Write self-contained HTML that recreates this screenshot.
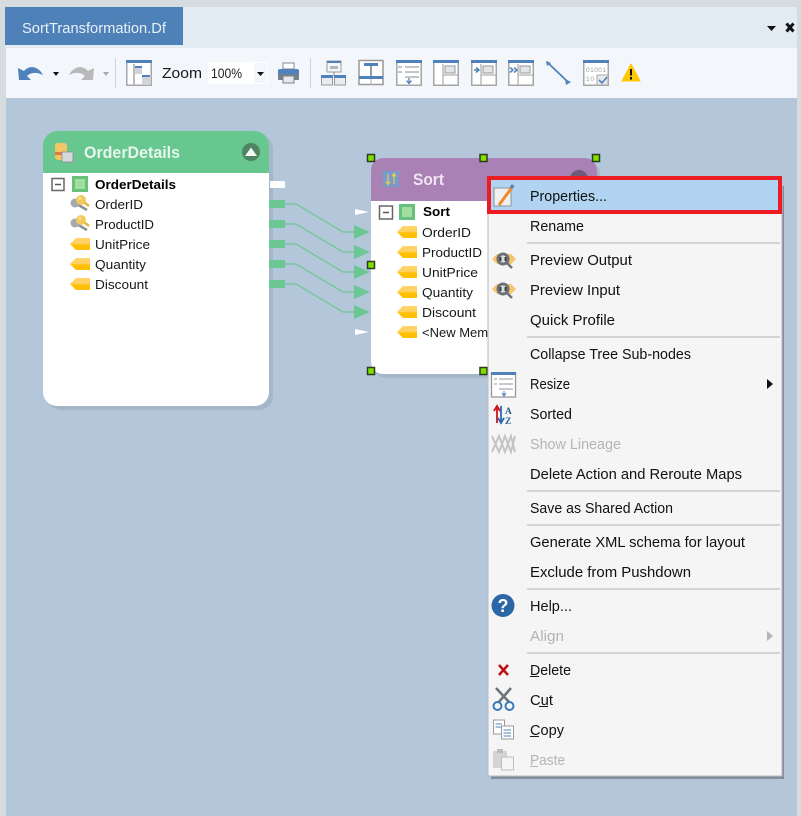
<!DOCTYPE html>
<html><head><meta charset="utf-8"><style>
html,body{margin:0;padding:0;width:801px;height:816px;overflow:hidden;background:#d6dbdf}
svg{display:block;filter:blur(.35px)}
text{font-family:"Liberation Sans",sans-serif}
.m{font-size:14.5px;fill:#111}
.g{font-size:14.5px;fill:#b4b4b4}
.t{font-size:13px;fill:#181818}
.b{font-size:13px;fill:#000;font-weight:bold}
.sep{stroke:#c8c8c8;stroke-width:1.5}
</style></head><body>
<svg width="801" height="816" viewBox="0 0 801 816" xmlns="http://www.w3.org/2000/svg">
<defs>
<linearGradient id="tag" x1="0" y1="0" x2="0" y2="1"><stop offset="0" stop-color="#ffd469"/><stop offset=".5" stop-color="#ffd060"/><stop offset=".55" stop-color="#ffc107"/><stop offset="1" stop-color="#ffbf00"/></linearGradient>
<symbol id="tagi" viewBox="0 0 20 12" width="20" height="12"><path d="M0 6L6 0H20V12H6Z" fill="url(#tag)"/></symbol>
<symbol id="key" viewBox="0 0 20 18" width="20" height="18"><path d="M5 9L17 16" stroke="#8a8f96" stroke-width="2.500" fill="none"/><circle cx="5" cy="9" r="4.500" fill="#a5aab0"/><path d="M11 6L19 12" stroke="#e3b43e" stroke-width="2.500" fill="none"/><circle cx="11" cy="6" r="5" fill="#f0cb5c"/><circle cx="10" cy="4.500" r="1.200" fill="#fbeab0"/></symbol>
<symbol id="prev" viewBox="0 0 26 20" width="26" height="20"><path d="M1 9L6 4H20L25 9L20 14H6Z" fill="#f3c56c"/><circle cx="12" cy="9" r="6.500" fill="#6c7078"/><circle cx="12" cy="9" r="3.600" fill="#d8dbdf"/><path d="M9.500 7v4M14.500 7v4" stroke="#333" stroke-width="1.800"/><path d="M16 13L21 18" stroke="#6c7078" stroke-width="2.500"/></symbol>
<symbol id="win" viewBox="0 0 26 26" width="26" height="26"><rect x=".75" y=".75" width="24.500" height="24.500" fill="#fff" stroke="#a6a6a6" stroke-width="1.500"/><rect x="0" y="0" width="26" height="3" fill="#4f81bd"/></symbol>
</defs>

<!-- chrome -->
<rect x="0" y="0" width="801" height="816" fill="#d6dbdf"/>
<rect x="5" y="7" width="792" height="41" fill="#e2eaf2"/>
<rect x="5" y="7" width="178" height="38" fill="#4f81b9"/>
<text x="22" y="33" font-size="14.500" fill="#e8f0f8" textLength="144" lengthAdjust="spacingAndGlyphs">SortTransformation.Df</text>
<path d="M767 26H776L771.500 31Z" fill="#111"/>
<path d="M786.500 23.500L793.500 31.500M793.500 23.500L786.500 31.500" stroke="#111" stroke-width="3"/>

<!-- toolbar -->
<rect x="6" y="48" width="791" height="50" fill="#f3f6fa"/>
<path d="M18 68L19 80L31 80L27 76C31 72 37 72 43 75C39 67 30 64 24 71Z" fill="#4f81bd"/>
<path d="M53 72H59L56 76Z" fill="#111"/>
<path d="M94 68L93 80L81 80L85 76C81 72 75 72 69 75C73 67 82 64 88 71Z" fill="#b9b9b9"/>
<path d="M103 72H109L106 76Z" fill="#a8a8a8"/>
<path d="M115.500 58V88M310.500 58V88" stroke="#cfd3d8"/>
<use href="#win" x="126" y="60"/>
<path d="M134 64V85" stroke="#a6a6a6" stroke-width="1.500"/>
<rect x="135" y="66" width="7" height="8" fill="#cfd4d9"/><rect x="135" y="66" width="7" height="2" fill="#4f81bd"/>
<rect x="142" y="75" width="8" height="9" fill="#cfd4d9"/><rect x="142" y="75" width="8" height="2" fill="#4f81bd"/>
<text x="162" y="78" font-size="14.500" fill="#1a1a1a" textLength="40" lengthAdjust="spacingAndGlyphs">Zoom</text>
<rect x="208" y="62" width="60" height="22" fill="#fff"/>
<rect x="254" y="63" width="13" height="20" fill="#f3f6fa"/>
<text x="211" y="78" font-size="14" fill="#222" textLength="31" lengthAdjust="spacingAndGlyphs">100%</text>
<path d="M257 72H264L260.500 76Z" fill="#111"/>
<!-- printer -->
<rect x="283" y="63" width="11" height="6" fill="#fff" stroke="#7c8894"/>
<rect x="278" y="69" width="21" height="10" rx="2" fill="#4f81bd"/>
<rect x="278" y="74" width="21" height="6" rx="1" fill="#76808a"/>
<rect x="283" y="76" width="11" height="7" fill="#e7e9ec" stroke="#76808a"/>
<!-- tree icon -->
<rect x="327" y="61" width="14" height="11" fill="#f3f6fa" stroke="#9a9a9a"/>
<rect x="327" y="61" width="14" height="2" fill="#4f81bd"/>
<rect x="330" y="66" width="8" height="3" fill="#b5b5b5"/>
<path d="M334 72V76" stroke="#888"/>
<rect x="321.500" y="76" width="11" height="9" fill="#e9ecef" stroke="#999"/><rect x="321" y="75" width="12" height="3" fill="#4f81bd"/>
<rect x="334.500" y="76" width="11" height="9" fill="#e9ecef" stroke="#999"/><rect x="334" y="75" width="12" height="3" fill="#4f81bd"/>
<!-- hierarchy -->
<rect x="359" y="60.500" width="24" height="24" fill="#fff" stroke="#999" stroke-width="1.500"/>
<rect x="364" y="63" width="14" height="3" fill="#4f81bd"/>
<path d="M371 66V76" stroke="#777" stroke-width="1.500"/>
<rect x="359" y="76" width="24" height="3" fill="#4f81bd"/>
<path d="M371 79V85" stroke="#aaa"/>
<!-- list -->
<use href="#win" x="396" y="60"/>
<path d="M405 67H419M405 72H419M405 77H419M398 67H402M398 72H402" stroke="#aeb2b6" stroke-width="1.500"/>
<path d="M409 78V83M406.500 80.500L409 83.500L411.500 80.500" stroke="#4f81bd" fill="none" stroke-width="1.300"/>
<!-- panels -->
<use href="#win" x="433" y="60"/>
<path d="M443 64V85M443 75H458" stroke="#b0b0b0" stroke-width="1.300"/>
<rect x="445" y="66" width="10" height="7" fill="#e3e5e8" stroke="#999"/>
<use href="#win" x="471" y="60"/>
<path d="M481 64V85M481 75H496" stroke="#b0b0b0" stroke-width="1.300"/>
<rect x="483" y="66" width="10" height="7" fill="#e3e5e8" stroke="#999"/>
<path d="M474 70H478M476 67.500L479 70L476 72.500" stroke="#4f81bd" stroke-width="1.500" fill="none"/>
<use href="#win" x="508" y="60"/>
<path d="M518 64V85M518 75H533" stroke="#b0b0b0" stroke-width="1.300"/>
<rect x="520" y="66" width="10" height="7" fill="#e3e5e8" stroke="#999"/>
<path d="M510 67.500L513 70L510 72.500M514 67.500L517 70L514 72.500" stroke="#4f81bd" stroke-width="1.500" fill="none"/>
<!-- line -->
<path d="M547 62L568 82" stroke="#4f81bd" stroke-width="1.800"/>
<path d="M546 61L551 63L547 66ZM571 82L566 85L565 79Z" fill="#4f81bd"/>
<!-- binary -->
<use href="#win" x="583" y="60"/>
<text x="586" y="72" font-size="6.500" fill="#9a9a9a" textLength="20">0 1 0 0 1</text>
<text x="586" y="81" font-size="6.500" fill="#9a9a9a" textLength="8">1 0</text>
<rect x="597" y="75" width="11" height="10" fill="#e6e8ea" stroke="#aaa"/>
<path d="M599 80L602 83L607 77" stroke="#4f81bd" stroke-width="1.600" fill="none"/>
<!-- warning -->
<path d="M631 64L640 81H622Z" fill="#ffc800" stroke="#ffc800" stroke-linejoin="round"/>
<path d="M631 69V75.500M631 77V79.500" stroke="#111" stroke-width="2"/>

<!-- canvas -->
<rect x="6" y="98" width="791" height="718" fill="#b4c6da"/>

<!-- OrderDetails node -->
<rect x="47" y="135" width="226" height="275" rx="14" fill="#a6b6c9"/>
<rect x="43" y="131" width="226" height="275" rx="14" fill="#fff"/>
<path d="M43 173V145A14 14 0 0 1 57 131H255A14 14 0 0 1 269 145V173Z" fill="#68c68f"/>
<rect x="55" y="143" width="12" height="17" rx="3" fill="#f3c565"/>
<rect x="55" y="152" width="14" height="3" fill="#d9683a" opacity=".8"/>
<rect x="62" y="152" width="11" height="10" fill="#d5d9dc" stroke="#8a8f94" stroke-width=".800"/>
<text x="84" y="158" font-size="16.500" font-weight="bold" fill="#e6f6ec" textLength="96" lengthAdjust="spacingAndGlyphs">OrderDetails</text>
<circle cx="251" cy="152" r="9" fill="#4d8463"/>
<path d="M245 156L251 147.500L257 156Z" fill="#f4f8f5"/>
<rect x="52" y="178.500" width="12" height="12" fill="#fff" stroke="#666" stroke-width="1.500"/>
<path d="M55 184.500H61" stroke="#555" stroke-width="1.500"/>
<rect x="72" y="176" width="16" height="16" fill="#67c07d"/><rect x="75" y="179" width="10" height="10" fill="#a3de9f"/>
<text class="b" x="95" y="189" textLength="81" lengthAdjust="spacingAndGlyphs">OrderDetails</text>
<use href="#key" x="70" y="194"/>
<use href="#key" x="70" y="214"/>
<use href="#tagi" x="70" y="238"/>
<use href="#tagi" x="70" y="258"/>
<use href="#tagi" x="70" y="278"/>
<text class="t" x="95" y="209" textLength="48" lengthAdjust="spacingAndGlyphs">OrderID</text>
<text class="t" x="95" y="229" textLength="59" lengthAdjust="spacingAndGlyphs">ProductID</text>
<text class="t" x="95" y="249" textLength="55" lengthAdjust="spacingAndGlyphs">UnitPrice</text>
<text class="t" x="95" y="269" textLength="51" lengthAdjust="spacingAndGlyphs">Quantity</text>
<text class="t" x="95" y="289" textLength="53" lengthAdjust="spacingAndGlyphs">Discount</text>

<!-- connectors -->
<rect x="270" y="181" width="15" height="7" rx="1" fill="#fff"/>
<g fill="#6cc893">
<rect x="269" y="200" width="16" height="8"/><rect x="269" y="220" width="16" height="8"/><rect x="269" y="240" width="16" height="8"/><rect x="269" y="260" width="16" height="8"/><rect x="269" y="280" width="16" height="8"/>
<path d="M354 225L370 232L354 239ZM354 245L370 252L354 259ZM354 265L370 272L354 279ZM354 285L370 292L354 299ZM354 305L370 312L354 319Z"/>
</g>
<g fill="none" stroke="#6cc893" stroke-width="1.300">
<path d="M285 204H296L343 232H356"/><path d="M285 224H296L343 252H356"/><path d="M285 244H296L343 272H356"/><path d="M285 264H296L343 292H356"/><path d="M285 284H296L343 312H356"/>
</g>
<path d="M355 209L369 212L355 215ZM355 329L369 332L355 335Z" fill="#fff"/>

<!-- Sort node -->
<rect x="374" y="162" width="226" height="216" rx="12" fill="#a6b6c9"/>
<rect x="371" y="158" width="226" height="216" rx="12" fill="#fff"/>
<path d="M371 201V170A12 12 0 0 1 383 158H585A12 12 0 0 1 597 170V201Z" fill="#a981b5"/>
<circle cx="579" cy="179" r="9" fill="#6f5a78"/>
<rect x="383" y="171" width="16" height="16" fill="#6fa0cf" opacity=".85"/>
<path d="M388 174V184M386 181.500L388 184.500L390 181.500M394 184V174M392 176.500L394 173.500L396 176.500" stroke="#f0c84a" stroke-width="1.200" fill="none"/>
<text x="413" y="185" font-size="16.500" font-weight="bold" fill="#efe6f2" textLength="31" lengthAdjust="spacingAndGlyphs">Sort</text>
<rect x="379.500" y="206" width="13" height="13" fill="#fff" stroke="#666" stroke-width="1.500"/>
<path d="M383 212.500H389" stroke="#555" stroke-width="1.500"/>
<rect x="399" y="204" width="16" height="16" fill="#67c07d"/><rect x="402" y="207" width="10" height="10" fill="#a3de9f"/>
<text class="b" x="423" y="216" textLength="27" lengthAdjust="spacingAndGlyphs">Sort</text>
<use href="#tagi" x="397" y="226"/>
<use href="#tagi" x="397" y="246"/>
<use href="#tagi" x="397" y="266"/>
<use href="#tagi" x="397" y="286"/>
<use href="#tagi" x="397" y="306"/>
<use href="#tagi" x="397" y="326"/>
<text class="t" x="422" y="237" textLength="49" lengthAdjust="spacingAndGlyphs">OrderID</text>
<text class="t" x="422" y="257" textLength="60" lengthAdjust="spacingAndGlyphs">ProductID</text>
<text class="t" x="422" y="277" textLength="56" lengthAdjust="spacingAndGlyphs">UnitPrice</text>
<text class="t" x="422" y="297" textLength="51" lengthAdjust="spacingAndGlyphs">Quantity</text>
<text class="t" x="422" y="317" textLength="54" lengthAdjust="spacingAndGlyphs">Discount</text>
<text class="t" x="422" y="337">&lt;New Member</text>
<g fill="#7fe000" stroke="#2c3a1e" stroke-width="1.500">
<rect x="367.500" y="154.500" width="7" height="7"/><rect x="480" y="154.500" width="7" height="7"/><rect x="592.500" y="154.500" width="7" height="7"/>
<rect x="367.500" y="261.500" width="7" height="7"/><rect x="367.500" y="367.500" width="7" height="7"/><rect x="480" y="367.500" width="7" height="7"/>
</g>

<!-- context menu -->
<rect x="491" y="186" width="293" height="593" fill="#6d7886" opacity=".7"/>
<rect x="488" y="178" width="294" height="598" fill="#f5f5f5" stroke="#b9b9b9"/>
<rect x="491" y="180" width="287" height="30" fill="#b0d4f1"/>
<rect x="489" y="178" width="291" height="34" fill="none" stroke="#ed1c24" stroke-width="4"/>

<!-- menu icons -->
<rect x="494" y="188" width="17" height="18" fill="#eef0f2" stroke="#8d9296"/>
<path d="M499 205L513 186" stroke="#ef8a2d" stroke-width="3"/>
<path d="M511 188L513 185" stroke="#4f81bd" stroke-width="3"/>
<use href="#prev" x="491" y="250"/>
<use href="#prev" x="491" y="280"/>
<rect x="491.500" y="373" width="24" height="24" fill="#fff" stroke="#999" stroke-width="1.300"/>
<rect x="491" y="372" width="25" height="3" fill="#4f81bd"/>
<path d="M499 379H513M499 384H513M499 389H513M494 379H497M494 384H497" stroke="#a8acb0" stroke-width="1.300"/>
<path d="M504 391V395M502 393L504 396L506 393" stroke="#4f81bd" fill="none"/>
<path d="M497 408V423M494 411L497 406L500 411" stroke="#d0121b" stroke-width="1.800" fill="none"/>
<path d="M501 406V421M498 418L501 423L504 418" stroke="#2a6bb5" stroke-width="1.800" fill="none"/>
<text x="505" y="414" font-size="9.500" font-weight="bold" fill="#2f5e95" style="font-family:'Liberation Serif',serif">A</text>
<text x="505" y="424" font-size="9.500" font-weight="bold" fill="#2f5e95" style="font-family:'Liberation Serif',serif">Z</text>
<g fill="none" stroke="#c4c4c4" stroke-width="2"><path d="M492 452L499 436L505 452L511 436L515 452"/><path d="M492 436L499 452L505 436L511 452L515 436"/></g>
<circle cx="503" cy="605.500" r="11.500" fill="#2b66a5"/>
<text x="497.500" y="612" font-size="18" font-weight="bold" fill="#fff">?</text>
<path d="M499 665L508 675M508 665L499 675" stroke="#c40d12" stroke-width="2.500"/>
<path d="M496 688L510 703M511 688L498 703" stroke="#6c7278" stroke-width="2.500"/>
<circle cx="497.500" cy="706" r="4" fill="#f5f5f5" stroke="#3b79bd" stroke-width="2"/>
<circle cx="509.500" cy="706" r="4" fill="#f5f5f5" stroke="#3b79bd" stroke-width="2"/>
<rect x="493.500" y="720" width="11" height="14" fill="#fff" stroke="#9a9a9a"/>
<path d="M495.500 724H502M495.500 727H502" stroke="#4f81bd"/>
<rect x="501.500" y="726" width="12" height="13" fill="#fff" stroke="#9a9a9a"/>
<path d="M503.500 730H511M503.500 733H511M503.500 736H511" stroke="#4f81bd"/>
<rect x="493" y="751" width="14" height="17" fill="#d4d4d4"/>
<rect x="497" y="749" width="6" height="4" fill="#bcbcbc"/>
<rect x="501.500" y="757" width="12" height="13" fill="#f5f5f5" stroke="#bdbdbd"/>

<!-- menu text -->
<text class="m" x="530" y="201" textLength="77" lengthAdjust="spacingAndGlyphs">Properties...</text>
<text class="m" x="530" y="231" textLength="54" lengthAdjust="spacingAndGlyphs">Rename</text>
<text class="m" x="530" y="265" textLength="102" lengthAdjust="spacingAndGlyphs">Preview Output</text>
<text class="m" x="530" y="295" textLength="90" lengthAdjust="spacingAndGlyphs">Preview Input</text>
<text class="m" x="530" y="325" textLength="85" lengthAdjust="spacingAndGlyphs">Quick Profile</text>
<text class="m" x="530" y="359" textLength="161" lengthAdjust="spacingAndGlyphs">Collapse Tree Sub-nodes</text>
<text class="m" x="530" y="389" textLength="40" lengthAdjust="spacingAndGlyphs">Resize</text>
<text class="m" x="530" y="419" textLength="42" lengthAdjust="spacingAndGlyphs">Sorted</text>
<text class="g" x="530" y="449" textLength="91" lengthAdjust="spacingAndGlyphs">Show Lineage</text>
<text class="m" x="530" y="479" textLength="212" lengthAdjust="spacingAndGlyphs">Delete Action and Reroute Maps</text>
<text class="m" x="530" y="513" textLength="143" lengthAdjust="spacingAndGlyphs">Save as Shared Action</text>
<text class="m" x="530" y="547" textLength="215" lengthAdjust="spacingAndGlyphs">Generate XML schema for layout</text>
<text class="m" x="530" y="577" textLength="161" lengthAdjust="spacingAndGlyphs">Exclude from Pushdown</text>
<text class="m" x="530" y="611" textLength="42" lengthAdjust="spacingAndGlyphs">Help...</text>
<text class="g" x="530" y="641" textLength="34" lengthAdjust="spacingAndGlyphs">Align</text>
<text class="m" x="530" y="675" textLength="41" lengthAdjust="spacingAndGlyphs">Delete</text>
<text class="m" x="530" y="705" textLength="23" lengthAdjust="spacingAndGlyphs">Cut</text>
<text class="m" x="530" y="735" textLength="34" lengthAdjust="spacingAndGlyphs">Copy</text>
<text class="g" x="530" y="765" textLength="35" lengthAdjust="spacingAndGlyphs">Paste</text>
<path d="M530 676.500H539M539 706.500H548M530 736.500H539" stroke="#1a1a1a"/>
<path d="M530 766.500H538" stroke="#b4b4b4"/>
<path d="M767 379L773 384L767 389Z" fill="#111"/>
<path d="M767 631L773 636L767 641Z" fill="#b4b4b4"/>
<g class="sep">
<path d="M527 243H780"/><path d="M527 337H780"/><path d="M527 491H780"/><path d="M527 525H780"/><path d="M527 589H780"/><path d="M527 653H780"/>
</g>
</svg>
</body></html>
